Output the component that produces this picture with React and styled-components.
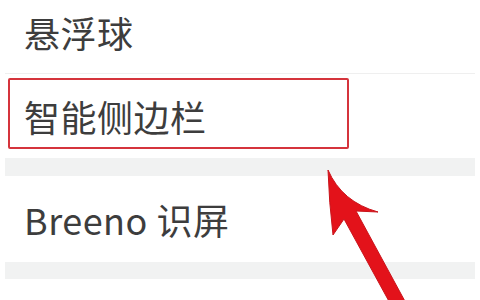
import React from "react";
import styled, { createGlobalStyle } from "styled-components";

const Global = createGlobalStyle`
  html, body { margin: 0; padding: 0; background: #ffffff; }
  body { font-family: "Noto Sans CJK SC", "Noto Sans", sans-serif; }
`;

const Page = styled.div`
  position: relative;
  width: 480px;
  height: 300px;
  overflow: hidden;
  background: #ffffff;
`;

const List = styled.div`
  display: flex;
  flex-direction: column;
`;

const Row = styled.div`
  display: flex;
  align-items: center;
  height: ${(p) => p.$h}px;
  padding: 0 0 ${(p) => p.$pb || 0}px 24px;
  box-sizing: border-box;
  font-family: "Noto Sans CJK SC", "Noto Sans", sans-serif;
  font-size: 36px;
  line-height: 1;
  color: #3d3d3d;
  letter-spacing: 0.5px;
`;

const Divider = styled.div`
  height: 1px;
  margin: 0 5px;
  background: #efefef;
`;

const Band = styled.div`
  height: ${(p) => p.$h}px;
  margin: 0 5px;
  background: #f1f2f2;
`;

const Highlight = styled.div`
  position: absolute;
  left: 8px;
  top: 78px;
  width: 341px;
  height: 71px;
  box-sizing: border-box;
  border: 2px solid #d5343c;
  border-radius: 2px;
`;

const Arrow = styled.svg`
  position: absolute;
  left: 0;
  top: 0;
  width: 480px;
  height: 300px;
  pointer-events: none;
`;

export default function App() {
  return (
    <>
      <Global />
      <Page>
        <List>
          <Row $h={73} $pb={10}>悬浮球</Row>
          <Divider />
          <Row $h={84}>智能侧边栏</Row>
          <Band $h={18} />
          <Row $h={86}>Breeno 识屏</Row>
          <Band $h={17} />
        </List>
        <Highlight />
        <Arrow viewBox="0 0 480 300">
          <path
            d="M328 170 Q342 202 378 212 L356 211 L407 305 L391 305 L344 219 L333 235 Q329 202 328 170 Z"
            fill="#e3121a"
            stroke="#c9141b"
            strokeWidth="1"
            strokeLinejoin="round"
          />
        </Arrow>
      </Page>
    </>
  );
}
